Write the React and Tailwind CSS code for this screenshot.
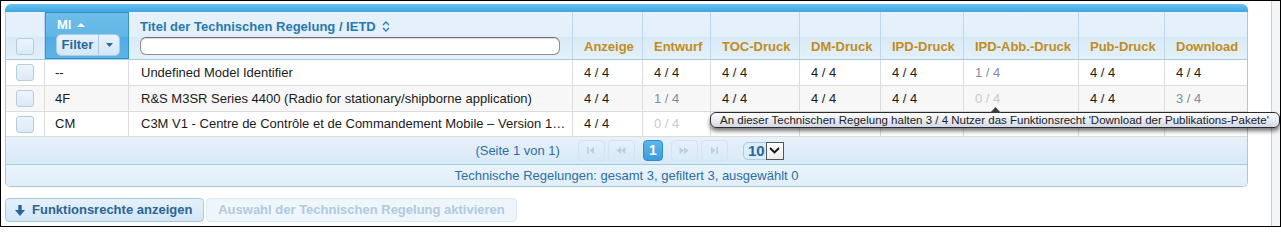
import React from 'react';

const cols =
  'grid grid-cols-[39px_84px_444px_70px_68px_89px_81px_83px_115px_86px_82px]';

const labels = ['Anzeige', 'Entwurf', 'TOC-Druck', 'DM-Druck', 'IPD-Druck', 'IPD-Abb.-Druck', 'Pub-Druck', 'Download'];

// n = normal, m = partial, l = none
const rows = [
  {
    mi: '--',
    title: 'Undefined Model Identifier',
    vals: ['n', 'n', 'n', 'n', 'n', 'm1', 'n', 'n'],
    bg: 'bg-white',
  },
  {
    mi: '4F',
    title: 'R&S M3SR Series 4400 (Radio for stationary/shipborne application)',
    vals: ['n', 'm1', 'n', 'n', 'n', 'l', 'n', 'm3'],
    bg: 'bg-[#f7f7f7]',
  },
  {
    mi: 'CM',
    title: 'C3M V1 - Centre de Contrôle et de Commandement Mobile – Version 1.0 (Système de commandement)',
    vals: ['n', 'l', '', '', '', '', '', ''],
    bg: 'bg-white',
  },
];

const Check = () => (
  <div className="w-[18px] h-[17px] rounded-[3px] border border-[#b3cde3] bg-[linear-gradient(#eef5fc,#dbe9f6)]" />
);

const Count = ({ v }) => {
  if (v === 'n') return <span className="text-[#1a1a1a]">4 / 4</span>;
  if (v === 'm1') return <span className="text-[#7d8e9f]">1 / 4</span>;
  if (v === 'm3') return <span className="text-[#7d8e9f]">3 / 4</span>;
  if (v === 'l') return <span className="text-[#c9c9c9]">0 / 4</span>;
  return null;
};

const PagerBtn = ({ children }) => (
  <div className="w-[27px] h-[21px] rounded-[4px] border border-[#d3e5f3] flex items-center justify-center">
    {children}
  </div>
);

const App = () => {
  return (
    <div className="relative w-[1281px] h-[227px] border border-black bg-white flex overflow-hidden font-['Liberation_Sans',Arial,sans-serif] text-[13px]">
      <div className="flex-1 pl-[4px] pt-[3px] flex flex-col">
        <div className="w-[1243px]">
          <div className="h-[8px] rounded-t-[6px] bg-[linear-gradient(#6cc3f0,#3ea6e2)]" />
          <div className="border-x border-b border-[#a6c9e2] rounded-b-[5px] overflow-hidden">
            {/* header */}
            <div className={`${cols} h-[48px] border-b border-[#a6c9e2] bg-[linear-gradient(#e6f1fa_0%,#e3effa_52%,#d9eaf7_53%,#e4f0fa_100%)]`}>
              <div className="border-r border-[#bcd7ee] flex items-end justify-center pb-[4px]">
                <Check />
              </div>
              <div className="border border-[#2f92d3] bg-[linear-gradient(#6ebde9_0%,#62b6e6_52%,#52ace2_53%,#5db3e5_100%)] px-[10px] pt-[4px] flex flex-col">
                <div className="flex items-center gap-[6px] text-white font-bold text-[13px] leading-[15px] pl-[1px]">
                  MI
                  <svg width="8" height="5" viewBox="0 0 8 5"><path d="M0 5 L4 1 L8 5 Z" fill="#fff" /></svg>
                </div>
                <div className="mt-[2px] w-[64px] h-[22px] rounded-[5px] border border-[#a9cbe4] bg-[linear-gradient(#e8f2fb,#d4e7f6)] flex items-stretch">
                  <div className="flex-1 flex items-center justify-center text-[#2a6799] font-bold text-[13px] border-r border-[#a9cbe4]">
                    Filter
                  </div>
                  <div className="w-[20px] flex items-center justify-center">
                    <svg width="7" height="4" viewBox="0 0 7 4"><path d="M0 0 L7 0 L3.5 4 Z" fill="#2a6799" /></svg>
                  </div>
                </div>
              </div>
              <div className="border-r border-[#bcd7ee] pl-[11px] pt-[7px] flex flex-col">
                <div className="flex items-center gap-[6px] text-[#2779b0] font-bold leading-[15px]">
                  Titel der Technischen Regelung / IETD
                  <svg width="8" height="11" viewBox="0 0 8 11" fill="none" stroke="#2779b0" strokeWidth="1.3">
                    <path d="M1 4 L4 1 L7 4" />
                    <path d="M1 7 L4 10 L7 7" />
                  </svg>
                </div>
                <div className="mt-[3px] w-[420px] h-[18px] rounded-[6px] border border-[#8e8e8e] border-t-[#6f6f6f] bg-white shadow-[inset_0_1px_1px_rgba(0,0,0,0.15)]" />
              </div>
              {labels.map((l, i) => (
                <div
                  key={l}
                  className={`${i < labels.length - 1 ? 'border-r border-[#bcd7ee]' : ''} pl-[11px] pb-[5px] flex items-end text-[#c18c1d] font-bold leading-[15px]`}
                >
                  {l}
                </div>
              ))}
            </div>

            {/* rows */}
            {rows.map((r, ri) => (
              <div key={r.mi} className={`${cols} ${ri === 2 ? 'h-[25px]' : 'h-[26px]'} border-b border-[#dcdcdc] ${r.bg}`}>
                <div className="border-r border-[#dcdcdc] flex items-center justify-center">
                  <Check />
                </div>
                <div className="border-r border-[#dcdcdc] pl-[10px] flex items-center text-[#1a1a1a]">{r.mi}</div>
                <div className="border-r border-[#dcdcdc] pl-[12px] pr-[5px] flex items-center min-w-0">
                  <span className="truncate text-[#1a1a1a]">{r.title}</span>
                </div>
                {r.vals.map((v, i) => (
                  <div
                    key={i}
                    className={`${i < r.vals.length - 1 ? 'border-r border-[#dcdcdc]' : ''} pl-[11px] flex items-center`}
                  >
                    <Count v={v} />
                  </div>
                ))}
              </div>
            ))}

            {/* pager */}
            <div className="h-[28px] border-b border-[#a6c9e2] bg-[linear-gradient(#e6f1fa,#d8e9f7)] flex items-center justify-center pl-[6px]">
              <span className="text-[#2e6ea3] mr-[18px]">(Seite 1 von 1)</span>
              <div className="flex items-center gap-[3px]">
                <PagerBtn>
                  <svg width="8" height="7" viewBox="0 0 8 7" fill="#bccfdf"><rect x="0" y="0" width="1.6" height="7" /><path d="M7 0 L2.5 3.5 L7 7 Z" /></svg>
                </PagerBtn>
                <PagerBtn>
                  <svg width="10" height="7" viewBox="0 0 10 7" fill="#bccfdf"><path d="M5 0 L0.5 3.5 L5 7 Z" /><path d="M9.5 0 L5 3.5 L9.5 7 Z" /></svg>
                </PagerBtn>
              </div>
              <div className="mx-[8px] w-[20px] h-[21px] rounded-[4px] border border-[#2a8fd2] bg-[linear-gradient(#5fb6ea,#3a9ddd)] flex items-center justify-center text-white font-bold text-[14px]">
                1
              </div>
              <div className="flex items-center gap-[3px]">
                <PagerBtn>
                  <svg width="10" height="7" viewBox="0 0 10 7" fill="#bccfdf"><path d="M0.5 0 L5 3.5 L0.5 7 Z" /><path d="M5 0 L9.5 3.5 L5 7 Z" /></svg>
                </PagerBtn>
                <PagerBtn>
                  <svg width="8" height="7" viewBox="0 0 8 7" fill="#bccfdf"><path d="M1 0 L5.5 3.5 L1 7 Z" /><rect x="6.4" y="0" width="1.6" height="7" /></svg>
                </PagerBtn>
              </div>
              <div className="ml-[15px] h-[18px] rounded-[5px] border border-[#a9cbe4] bg-[#dcecf8] flex items-center pl-[4px]">
                <span className="text-[#2a6799] font-bold text-[15px] leading-[16px] mr-[1px]">10</span>
                <div className="w-[18px] h-[18px] -my-px -mr-px border border-[#555] bg-[linear-gradient(#ffffff,#ececec)] flex items-center justify-center">
                  <svg width="11" height="7" viewBox="0 0 11 7" fill="none" stroke="#111" strokeWidth="1.8"><path d="M1 1 L5.5 5.5 L10 1" /></svg>
                </div>
              </div>
            </div>

            {/* status */}
            <div className="h-[21px] bg-[linear-gradient(#e9f3fb,#e1eef9)] flex items-center justify-center text-[#2e6ea3]">
              Technische Regelungen: gesamt 3, gefiltert 3, ausgewählt 0
            </div>
          </div>
        </div>

        {/* buttons */}
        <div className="mt-[11px] flex gap-[2px]">
          <button className="h-[24px] w-[199px] rounded-[4px] border border-[#a6c9e2] bg-[linear-gradient(#e6f1fa,#d2e5f5)] flex items-center pl-[9px] gap-[7px] text-[#2a6496] font-bold text-[13px]">
            <svg width="10" height="11" viewBox="0 0 10 11" fill="#2a6496">
              <rect x="3.3" y="0" width="3.4" height="6" />
              <path d="M0 5 L10 5 L5 11 Z" />
            </svg>
            Funktionsrechte anzeigen
          </button>
          <button className="h-[24px] w-[311px] rounded-[4px] border border-[#dbe9f5] bg-[#eef5fb] flex items-center justify-center text-[#b2cadf] font-bold text-[13px]">
            Auswahl der Technischen Regelung aktivieren
          </button>
        </div>
      </div>
      <div className="w-[9px] border-l border-[#cccccc] bg-[#f4f5f7]" />

      {/* tooltip */}
      <div className="absolute left-[709px] top-[111px] w-[570px] z-10">
        <svg className="absolute left-[280px] -top-[5px]" width="11" height="6" viewBox="0 0 11 6">
          <path d="M0 6 L5.5 0 L11 6 Z" fill="#3c3c3c" />
        </svg>
        <div className="h-[16px] rounded-[6px] border border-[#2b2b2b] bg-[linear-gradient(#ffffff,#d2d8e6)] shadow-[0_3px_4px_rgba(0,0,0,0.55)] px-[9px] flex items-center text-[11.5px] text-[#222] whitespace-nowrap leading-[14px]">
          An dieser Technischen Regelung halten 3 / 4 Nutzer das Funktionsrecht 'Download der Publikations-Pakete'
        </div>
      </div>
    </div>
  );
};

export default App;
